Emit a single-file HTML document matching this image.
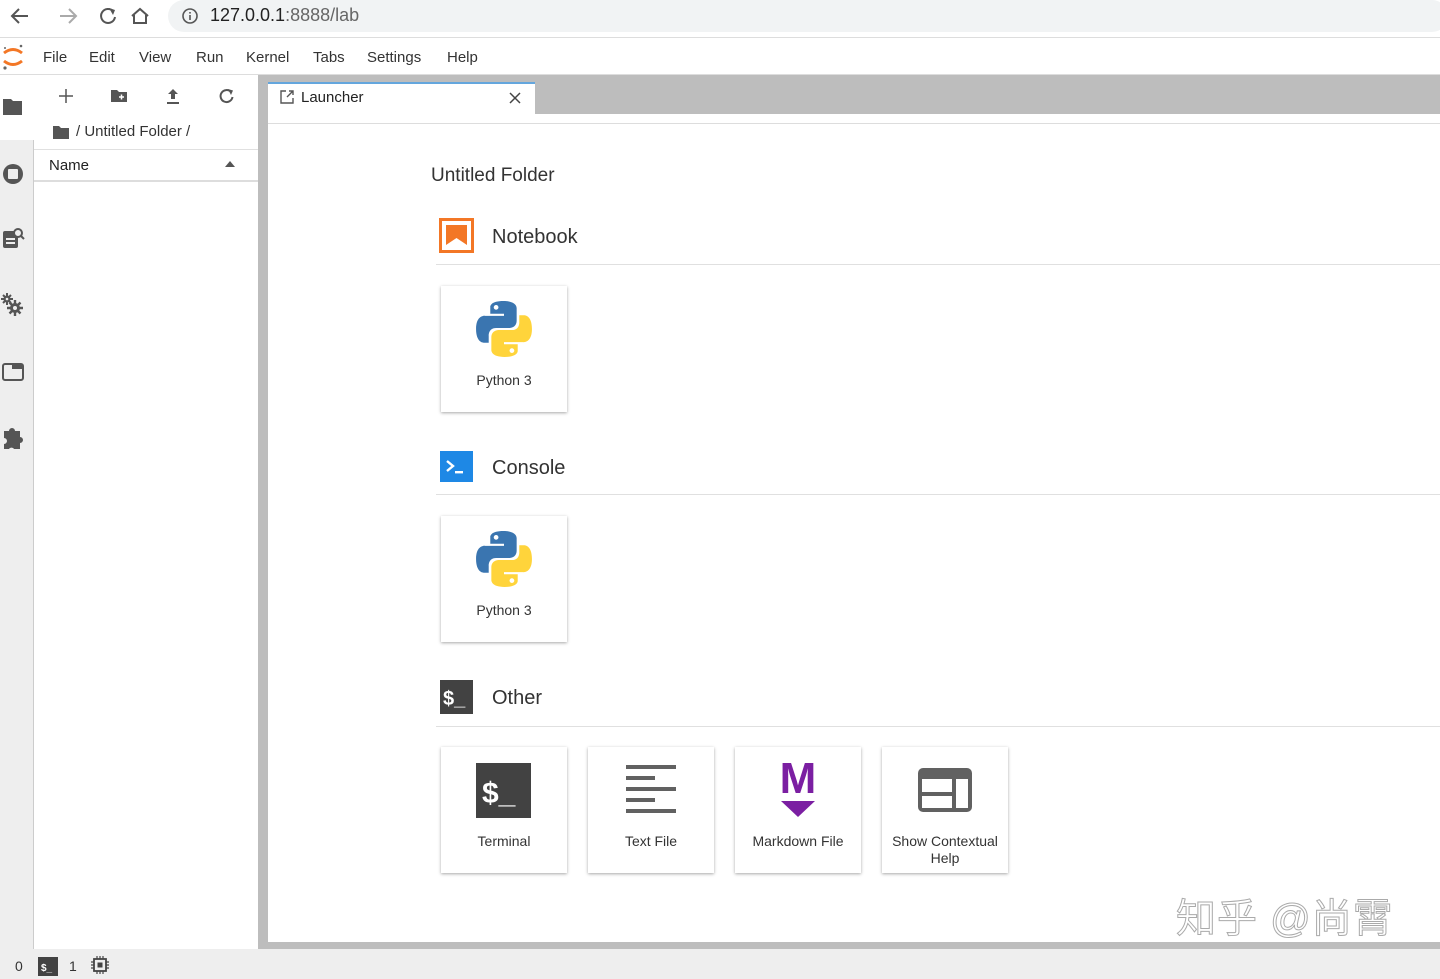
<!DOCTYPE html>
<html><head><meta charset="utf-8"><style>
*{box-sizing:border-box;margin:0;padding:0}
body{width:1440px;height:979px;overflow:hidden;font-family:"Liberation Sans","Noto Sans CJK SC",sans-serif;background:#fff;position:relative;color:#333}
.abs{position:absolute}
#browser{left:0;top:0;width:1440px;height:38px;background:#fff;border-bottom:1px solid #ddd}
#pill{left:168px;top:0;width:1280px;height:32px;background:#f1f3f4;border-radius:16px}
#menu{left:0;top:39px;width:1440px;height:36px;background:#fff;border-bottom:1px solid #ddd}
.mi{position:absolute;top:49px;font-size:15px;color:#333}
#side{left:0;top:75px;width:34px;height:874px;background:#eee;border-right:1px solid #ccc}
#files{left:34px;top:75px;width:224px;height:874px;background:#fff}
#split{left:258px;top:75px;width:10px;height:874px;background:#bdbdbd}
#tabbar{left:268px;top:75px;width:1172px;height:39px;background:#bdbdbd}
#tab{left:268px;top:82px;width:267px;height:42px;background:#fff;border-top:2px solid #64a6dd}
#main{left:268px;top:114px;width:1172px;height:828px;background:#fff}
#bottomb{left:268px;top:942px;width:1172px;height:7px;background:#bdbdbd}
#status{left:0;top:949px;width:1440px;height:30px;background:#eee}
.sec{position:absolute;left:492px;font-size:20px;color:#333}
.hr{position:absolute;left:436px;width:1004px;height:1px;background:#e0e0e0}
.card{position:absolute;width:126px;height:126px;background:#fff;box-shadow:0 1px 3px rgba(0,0,0,.35);text-align:center;font-size:14px;color:#333}
.card span{position:absolute;left:0;right:0;top:86px;line-height:17px}
</style></head><body>
<div class="abs" id="browser"></div>
<div class="abs" id="pill"></div>
<svg class="abs" style="left:8px;top:5px" width="160" height="22" viewBox="0 0 160 22">
<path d="M20 11H5M11 4L4 11l7 7" stroke="#555" stroke-width="2" fill="none"/>
<path d="M52 11h15M61 4l7 7-7 7" stroke="#aaa" stroke-width="2" fill="none"/>
<path d="M105 6a7 7 0 1 0 2 6" stroke="#555" stroke-width="2" fill="none"/><path d="M101 3l6 2-2 5z" fill="#555"/>
<path d="M124 11l8-7 8 7M126 10v8h12v-8" stroke="#555" stroke-width="2" fill="none"/>
</svg>
<svg class="abs" style="left:181px;top:7px" width="18" height="18"><circle cx="9" cy="9" r="7" stroke="#555" stroke-width="1.6" fill="none"/><rect x="8.2" y="8" width="1.6" height="5" fill="#555"/><rect x="8.2" y="5" width="1.6" height="1.6" fill="#555"/></svg>
<div class="abs" style="left:210px;top:5px;font-size:18px;color:#222">127.0.0.1<span style="color:#666">:8888/lab</span></div>

<div class="abs" id="menu"></div>
<svg class="abs" style="left:1px;top:43px" width="24" height="28"><path d="M3 10q9-7 18 0" stroke="#f37726" stroke-width="3" fill="none"/><path d="M3 18q9 7 18 0" stroke="#f37726" stroke-width="3" fill="none"/><circle cx="20" cy="3" r="1.3" fill="#666"/><circle cx="4" cy="25" r="1.6" fill="#666"/><circle cx="4" cy="5" r="1" fill="#666"/></svg>
<div class="mi" style="left:43px">File</div><div class="mi" style="left:89px">Edit</div><div class="mi" style="left:139px">View</div><div class="mi" style="left:196px">Run</div><div class="mi" style="left:246px">Kernel</div><div class="mi" style="left:313px">Tabs</div><div class="mi" style="left:367px">Settings</div><div class="mi" style="left:447px">Help</div>

<div class="abs" id="side"></div>
<div class="abs" style="left:0;top:75px;width:34px;height:65px;background:#fff"></div>
<svg class="abs" style="left:0;top:75px" width="34" height="400">
<path d="M3 24h8l2 2h9v14H3z" fill="#555"/>
<circle cx="13" cy="99" r="10" fill="#555"/><rect x="8" y="94" width="10" height="10" rx="1" fill="#eee"/>
<rect x="3" y="156" width="15" height="17" rx="2" fill="#555"/><rect x="6" y="163" width="9" height="2" fill="#eee"/><rect x="6" y="167" width="9" height="2" fill="#eee"/><circle cx="18" cy="158" r="4" stroke="#555" stroke-width="2" fill="#eee"/><path d="M21 161l3 3" stroke="#555" stroke-width="2"/>
<circle cx="7" cy="224" r="3.5" fill="#555"/><path d="M7 218v12M1 224h12M3 220l8 8M11 220l-8 8" stroke="#555" stroke-width="2"/><circle cx="7" cy="224" r="1.3" fill="#eee"/>
<circle cx="15" cy="233" r="5" fill="#555"/><path d="M15 225v16M7 233h16M9.5 227.5l11 11M20.5 227.5l-11 11" stroke="#555" stroke-width="2.4"/><circle cx="15" cy="233" r="2" fill="#eee"/>
<rect x="3" y="289" width="20" height="16" rx="2" stroke="#555" stroke-width="2" fill="none"/><rect x="12" y="289" width="11" height="5" fill="#555"/>
<path d="M4 356h5a3 3 0 0 1 6 0h5v6a3 3 0 0 1 0 6v6h-6a3 3 0 0 0-5 0H4v-5a3 3 0 0 0 0-6z" fill="#555"/>
</svg>

<div class="abs" id="files"></div>
<svg class="abs" style="left:55px;top:86px" width="190" height="20">
<path d="M11 3v14M4 10h14" stroke="#555" stroke-width="1.5"/>
<path d="M56 4h6l2 2h8v10H56z" fill="#555"/><path d="M64 11h5M66.5 8.5v5" stroke="#fff" stroke-width="1.5"/>
<path d="M118 3l-5 5h3v5h4V8h3zM112 16h12v2h-12z" fill="#555"/>
<path d="M176 6a6 6 0 1 0 1.5 5" stroke="#555" stroke-width="2" fill="none"/><path d="M173 3l5 1.5-2 4.5z" fill="#555"/>
</svg>
<svg class="abs" style="left:52px;top:124px" width="18" height="16"><path d="M1 2h6l2 2h8v11H1z" fill="#555"/></svg>
<div class="abs" style="left:76px;top:123px;font-size:15px;color:#333">/ Untitled Folder /</div>
<div class="abs" style="left:34px;top:149px;width:224px;height:1px;background:#e0e0e0"></div>
<div class="abs" style="left:49px;top:157px;font-size:15px;color:#222">Name</div>
<svg class="abs" style="left:224px;top:160px" width="12" height="8"><path d="M1 7l5-6 5 6z" fill="#555"/></svg>
<div class="abs" style="left:34px;top:180px;width:224px;height:2px;background:#ddd"></div>

<div class="abs" id="split"></div>
<div class="abs" id="tabbar"></div>
<div class="abs" id="main"></div>
<div class="abs" id="tab"></div>
<div class="abs" style="left:268px;top:123px;width:1172px;height:1px;background:#ddd"></div>
<svg class="abs" style="left:279px;top:89px" width="16" height="16"><path d="M7 2H2v12h12V9" stroke="#555" stroke-width="1.4" fill="none"/><path d="M8 8l6-6M10 2h4v4" stroke="#555" stroke-width="1.4" fill="none"/></svg>
<div class="abs" style="left:301px;top:89px;font-size:15px;color:#222">Launcher</div>
<svg class="abs" style="left:508px;top:91px" width="14" height="14"><path d="M2 2l10 10M12 2L2 12" stroke="#444" stroke-width="1.5"/></svg>

<div class="abs" style="left:431px;top:165px;font-size:19px;color:#333">Untitled Folder</div>

<svg class="abs" style="left:439px;top:218px" width="35" height="35"><rect x="1.5" y="1.5" width="32" height="32" fill="none" stroke="#f37726" stroke-width="3"/><path d="M7 7h21v20l-10.5-7L7 27z" fill="#f37726"/></svg>
<div class="sec" style="top:226px">Notebook</div>
<div class="hr" style="top:264px"></div>

<svg class="abs" style="left:440px;top:451px" width="33" height="31"><rect width="33" height="31" fill="#1e88e5"/><path d="M7 10l6 5-6 5" stroke="#fff" stroke-width="2.4" fill="none"/><rect x="15" y="20" width="8" height="2.4" fill="#fff"/></svg>
<div class="sec" style="top:457px">Console</div>
<div class="hr" style="top:494px"></div>

<svg class="abs" style="left:440px;top:680px" width="33" height="34"><rect width="33" height="34" fill="#424242"/><text x="3" y="25" font-family="Liberation Sans" font-weight="bold" font-size="20" fill="#fff">$_</text></svg>
<div class="sec" style="top:687px">Other</div>
<div class="hr" style="top:726px"></div>

<div class="card" style="left:441px;top:286px"><svg style="position:absolute;left:34px;top:14px" width="58" height="58" viewBox="0 0 110 110"><path d="M54 2c-27 0-25 12-25 12v12h26v4H19S2 28 2 55s15 26 15 26h9V68s-1-15 14-15h25s14 0 14-14V16S81 2 54 2z" fill="#3a75b0"/><circle cx="40" cy="14" r="4.5" fill="#fff"/><path d="M56 108c27 0 25-12 25-12V84H55v-4h36s17 2 17-25-15-26-15-26h-9v13s1 15-14 15H45s-14 0-14 14v23s-2 14 25 14z" fill="#ffd43b"/><circle cx="70" cy="96" r="4.5" fill="#fff"/></svg><span>Python 3</span></div>
<div class="card" style="left:441px;top:516px"><svg style="position:absolute;left:34px;top:14px" width="58" height="58" viewBox="0 0 110 110"><path d="M54 2c-27 0-25 12-25 12v12h26v4H19S2 28 2 55s15 26 15 26h9V68s-1-15 14-15h25s14 0 14-14V16S81 2 54 2z" fill="#3a75b0"/><circle cx="40" cy="14" r="4.5" fill="#fff"/><path d="M56 108c27 0 25-12 25-12V84H55v-4h36s17 2 17-25-15-26-15-26h-9v13s1 15-14 15H45s-14 0-14 14v23s-2 14 25 14z" fill="#ffd43b"/><circle cx="70" cy="96" r="4.5" fill="#fff"/></svg><span style="top:86px">Python 3</span></div>

<div class="card" style="left:441px;top:747px"><svg style="position:absolute;left:35px;top:16px" width="55" height="55"><rect width="55" height="55" fill="#424242"/><text x="6" y="40" font-family="Liberation Sans" font-weight="bold" font-size="30" fill="#fff">$_</text></svg><span>Terminal</span></div>
<div class="card" style="left:588px;top:747px"><svg style="position:absolute;left:38px;top:18px" width="50" height="50"><g fill="#616161"><rect y="0" width="50" height="4"/><rect y="11" width="29" height="4"/><rect y="22" width="50" height="4"/><rect y="33" width="29" height="4"/><rect y="44" width="50" height="4"/></g></svg><span>Text File</span></div>
<div class="card" style="left:735px;top:747px"><svg style="position:absolute;left:43px;top:12px" width="40" height="62"><text x="20" y="34" text-anchor="middle" font-family="Liberation Sans" font-weight="bold" font-size="44" fill="#7b1fa2">M</text><path d="M3 42h34L20 58z" fill="#7b1fa2"/></svg><span>Markdown File</span></div>
<div class="card" style="left:882px;top:747px"><svg style="position:absolute;left:36px;top:21px" width="54" height="44"><rect width="54" height="44" rx="5" fill="#616161"/><rect x="4" y="11" width="30" height="13" fill="#fff"/><rect x="4" y="28" width="30" height="12" fill="#fff"/><rect x="38" y="11" width="12" height="29" fill="#fff"/></svg><span>Show Contextual<br>Help</span></div>

<div class="abs" style="left:1176px;top:896px;font-size:40px;line-height:46px;color:#fff;-webkit-text-stroke:1px #aaa;letter-spacing:1px">知乎 @尚霄</div>

<div class="abs" id="bottomb"></div>
<div class="abs" id="status"></div>
<div class="abs" style="left:15px;top:958px;font-size:14px;color:#333">0</div>
<svg class="abs" style="left:38px;top:957px" width="20" height="19"><rect width="20" height="19" fill="#424242"/><text x="3" y="14" font-family="Liberation Sans" font-weight="bold" font-size="10" fill="#fff">$_</text></svg>
<div class="abs" style="left:69px;top:958px;font-size:14px;color:#333">1</div>
<svg class="abs" style="left:91px;top:956px" width="18" height="18"><rect x="3" y="3" width="12" height="12" stroke="#444" stroke-width="1.8" fill="none"/><rect x="6.5" y="6.5" width="5" height="5" fill="#444"/><path d="M6 0v3M9 0v3M12 0v3M6 15v3M9 15v3M12 15v3M0 6h3M0 9h3M0 12h3M15 6h3M15 9h3M15 12h3" stroke="#444" stroke-width="1.2"/></svg>
</body></html>
